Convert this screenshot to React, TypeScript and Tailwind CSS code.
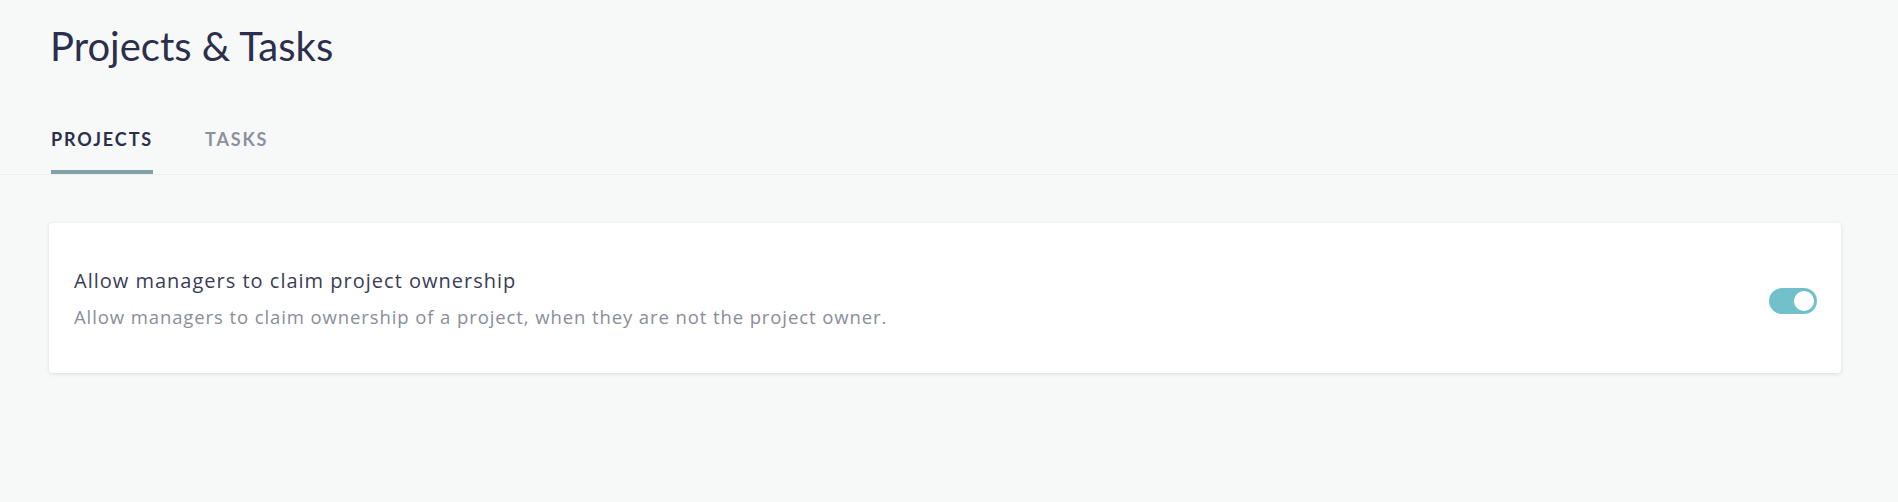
import React from "react";

export default function App() {
  return (
    <div
      className="min-h-[502px] w-full bg-[#f7f8f8] text-[#2d3250]"
      style={{ fontFamily: "Lato, 'Noto Sans', sans-serif" }}
    >
      <div className="border-b border-[#ebeeef] bg-[#f7f9f9]">
        <div className="pl-[50px] pt-[22px]">
          <h1 className="text-[40px] leading-[48px] font-normal text-[#2b2f4c]">
            Projects &amp; Tasks
          </h1>
        </div>
        <div className="mt-[58px] flex gap-[52px] pl-[51px]">
          <div className="flex flex-col">
            <span className="text-[18px] leading-[22px] font-bold tracking-[1.9px] text-[#2b2f4c]">
              PROJECTS
            </span>
            <span className="mt-[20px] block h-[4px] w-full bg-[#7ea2a7]" />
          </div>
          <div className="flex flex-col">
            <span className="text-[18px] leading-[22px] font-bold tracking-[1.8px] text-[#8e909e]">
              TASKS
            </span>
            <span className="mt-[20px] block h-[4px] w-full" />
          </div>
        </div>
      </div>
      <div className="ml-[49px] mr-[57px] mt-[48px] flex h-[150px] items-center justify-between rounded-[4px] bg-white pl-[25px] pr-[24px] shadow-[0_1px_4px_rgba(0,0,0,0.12)]">
        <div
          className="flex flex-col pt-[2px]"
          style={{ fontFamily: "'Open Sans', 'Noto Sans', sans-serif" }}
        >
          <span className="text-[20px] leading-[24px] tracking-[1px] text-[#3a3d57]">
            Allow managers to claim project ownership
          </span>
          <span className="mt-[12px] text-[18.5px] leading-[24px] tracking-[0.9px] text-[#8b8d9b]">
            Allow managers to claim ownership of a project, when they are not the project owner.
          </span>
        </div>
        <button
          type="button"
          className="mt-[6px] flex h-[26px] w-[48px] shrink-0 items-center justify-end rounded-full bg-[#72c1ca] px-[3px]"
          aria-pressed="true"
        >
          <span className="block h-[20px] w-[20px] rounded-full bg-white" />
        </button>
      </div>
    </div>
  );
}
